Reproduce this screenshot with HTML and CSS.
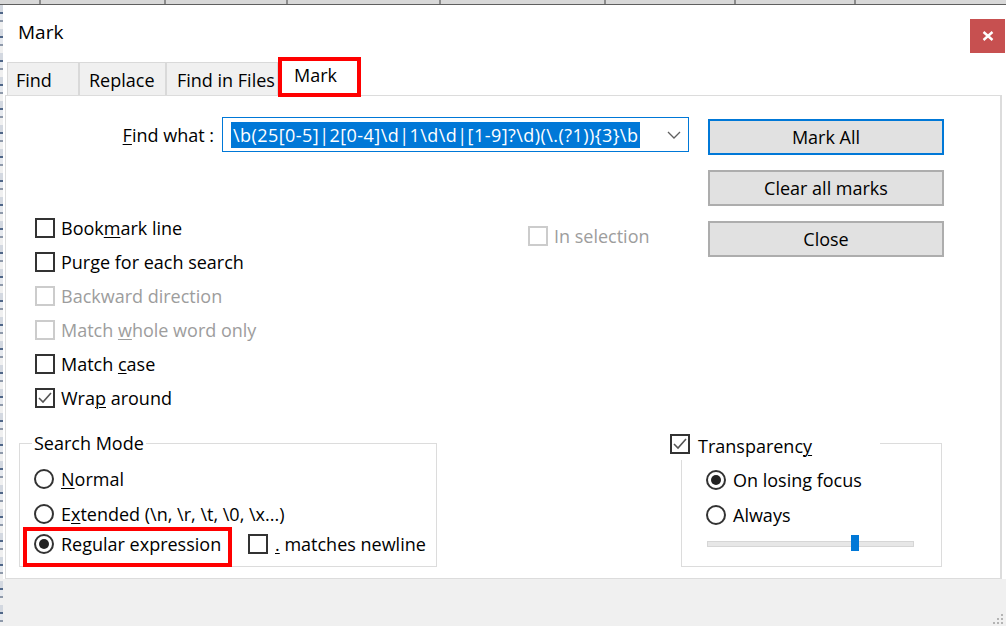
FILE: index.html
```html
<!DOCTYPE html>
<html>
<head>
<meta charset="utf-8">
<link rel="stylesheet" href="styles.css">
</head>
<body>
<div class="topstrip">
  <span class="seg s1"></span><span class="seg s2"></span><span class="seg s3"></span><span class="seg s4"></span><span class="seg s5"></span><span class="seg s6"></span><span class="seg s7"></span>
</div>
<div class="main">
  <div class="leftstrip"></div>
  <div class="window">
    <div class="titlebar">
      <div class="title">Mark</div>
      <div class="closebtn">
        <svg width="12" height="10" viewBox="0 0 12 10"><path d="M1.5 1 L10.5 9 M10.5 1 L1.5 9" stroke="#fff" stroke-width="2.4" fill="none"/></svg>
      </div>
    </div>
    <div class="tabs">
      <div class="tab t-find">Find</div>
      <div class="tab t-replace">Replace</div>
      <div class="tab t-files">Find in Files</div>
      <div class="tab t-mark">Mark</div>
    </div>
    <div class="panel">
      <div class="top">
        <div class="leftcol">
          <div class="findrow">
            <div class="findlabel"><u>F</u>ind what :</div>
            <div class="combo">
              <span class="sel">\b(25[0-5]|2[0-4]\d|1\d\d|[1-9]?\d)(\.(?1)){3}\b</span>
              <svg class="chev" width="14" height="8" viewBox="0 0 14 8"><path d="M1 1 L7 7 L13 1" stroke="#606060" stroke-width="1.3" fill="none"/></svg>
            </div>
          </div>
          <div class="options">
            <div class="cblist">
              <div class="cbrow"><span class="box"></span><span>Book<u>m</u>ark line</span></div>
              <div class="cbrow"><span class="box"></span><span>Purge for each search</span></div>
              <div class="cbrow disabled"><span class="box"></span><span>Backward direction</span></div>
              <div class="cbrow disabled"><span class="box"></span><span>Match <u>w</u>hole word only</span></div>
              <div class="cbrow"><span class="box"></span><span>Match <u>c</u>ase</span></div>
              <div class="cbrow"><span class="box checked"><svg width="16" height="16" viewBox="0 0 16 16"><path d="M2 8 L6 12 L14 3" stroke="#555" stroke-width="1.6" fill="none"/></svg></span><span>Wra<u>p</u> around</span></div>
            </div>
            <div class="insel">
              <div class="cbrow disabled"><span class="box"></span><span>In selection</span></div>
            </div>
          </div>
        </div>
        <div class="btncol">
          <div class="btn default">Mark All</div>
          <div class="btn">Clear all marks</div>
          <div class="btn">Close</div>
        </div>
      </div>
      <div class="bottom">
        <div class="smode">
          <span class="gtitle">Search Mode</span>
          <div class="rrow r1"><span class="radio"></span><span><u>N</u>ormal</span></div>
          <div class="rrow r2"><span class="radio"></span><span>E<u>x</u>tended (\n, \r, \t, \0, \x...)</span></div>
          <div class="rrow r3">
            <div class="hl"><span class="radio on"><span class="dot"></span></span><span>Regular expression</span></div>
            <div class="nl"><span class="box"></span><span><u>.</u> matches newline</span></div>
          </div>
        </div>
        <div class="tgroup">
          <div class="thead">
            <span class="box checked"><svg width="16" height="16" viewBox="0 0 16 16"><path d="M2 8 L6 12 L14 3" stroke="#555" stroke-width="1.6" fill="none"/></svg></span>
            <span class="tlabel">Transparenc<u>y</u></span>
            <span class="tline"></span>
          </div>
          <div class="tbody">
            <div class="rrow t1"><span class="radio on"><span class="dot"></span></span><span>On losing focus</span></div>
            <div class="rrow t2"><span class="radio"></span><span>Always</span></div>
            <div class="slider"><div class="track"></div><div class="thumb"></div></div>
          </div>
        </div>
      </div>
    </div>
    <div class="footer">
      <svg class="grip" width="14" height="14" viewBox="0 0 14 14">
        <rect x="11" y="3" width="2" height="2" fill="#b4b4b4"/>
        <rect x="7" y="7" width="2" height="2" fill="#b4b4b4"/>
        <rect x="11" y="7" width="2" height="2" fill="#b4b4b4"/>
        <rect x="3" y="11" width="2" height="2" fill="#b4b4b4"/>
        <rect x="7" y="11" width="2" height="2" fill="#b4b4b4"/>
        <rect x="11" y="11" width="2" height="2" fill="#b4b4b4"/>
      </svg>
    </div>
  </div>
</div>
</body>
</html>
```
FILE: styles.css
```css
* { box-sizing: border-box; }
html, body { margin: 0; padding: 0; }
body {
  width: 1006px;
  height: 626px;
  overflow: hidden;
  font-family: "Open Sans", "Noto Sans", sans-serif;
  font-size: 18px;
  color: #000;
  background: #fff;
}
u { text-decoration-thickness: 1px; text-underline-offset: 2px; }

.topstrip {
  height: 5px;
  display: flex;
  background: #d8d8d8;
  border-bottom: 1px solid #5f5f5f;
}
.seg { height: 4px; border-right: 2px solid #8c8c8c; }
.s1 { width: 41px; }
.s2 { width: 125px; }
.s3 { width: 122px; }
.s4 { width: 153px; }
.s5 { width: 165px; }
.s6 { width: 130px; }
.s7 { width: 120px; }

.main { display: flex; height: 621px; }
.leftstrip {
  width: 3px;
  background: repeating-linear-gradient(to bottom, #d3d8e0 0 7px, #4f6688 7px 9px, #e6e9ee 9px 15px, #8e99aa 15px 17px, #f0f0f0 17px 24px);
}
.window {
  flex: 1;
  display: flex;
  flex-direction: column;
  background: #fff;
}

.titlebar {
  height: 52px;
  display: flex;
  justify-content: space-between;
  align-items: flex-start;
}
.title {
  font-size: 19px;
  line-height: 26px;
  padding: 14px 0 0 15px;
}
.closebtn {
  margin: 14px 1px 0 0;
  width: 35px;
  height: 34px;
  background: #c75050;
  display: flex;
  align-items: center;
  justify-content: center;
}

.tabs {
  height: 38px;
  display: flex;
  align-items: flex-end;
  padding-left: 4px;
}
.tab {
  height: 33px;
  border: 1px solid #d9d9d9;
  border-bottom: none;
  background: #f0f0f0;
  padding-top: 5px;
  line-height: 24px;
  white-space: nowrap;
}
.t-find { width: 72px; padding-left: 8px; }
.t-replace { width: 87px; padding-left: 9px; }
.t-files { width: 112px; padding-left: 10px; }
.t-mark {
  position: relative;
  z-index: 1;
  width: 83px;
  height: 40px;
  margin-bottom: -2px;
  border: 4px solid #f00;
  background: #fff;
  padding: 2px 0 0 12px;
}

.panel {
  height: 484px;
  margin: 0 4px 0 2px;
  border: 1px solid #dcdcdc;
  border-right-width: 2px;
  background: #fff;
}

.top { display: flex; align-items: flex-start; padding-top: 21px; }
.leftcol { width: 683px; }
.findrow { display: flex; align-items: center; height: 35px; }
.findlabel { width: 208px; text-align: right; }
.combo {
  margin-left: 8px;
  width: 467px;
  height: 35px;
  border: 1px solid #0078d7;
  display: flex;
  align-items: center;
  padding-left: 8px;
}
.sel {
  background: #0078d7;
  color: #fff;
  letter-spacing: 0.45px;
  line-height: 26px;
  padding: 0 2px;
  white-space: nowrap;
}
.chev { margin-left: auto; margin-right: 7px; }

.options { display: flex; margin-top: 59px; }
.cblist { width: 522px; padding-left: 29px; }
.cbrow { height: 34px; display: flex; align-items: center; gap: 6px; white-space: nowrap; }
.box {
  width: 20px;
  height: 20px;
  flex: none;
  border: 2px solid #333;
  background: #fff;
  display: flex;
  align-items: center;
  justify-content: center;
}
.disabled { color: #9d9d9d; }
.disabled .box { border-color: #cccccc; }
.insel { margin-top: 8px; }

.btncol {
  margin-left: 19px;
  margin-top: 2px;
  width: 236px;
  display: flex;
  flex-direction: column;
  gap: 15px;
}
.btn {
  height: 36px;
  background: #e1e1e1;
  border: 2px solid #adadad;
  display: flex;
  align-items: center;
  justify-content: center;
}
.btn.default { border-color: #0078d7; }

.bottom { display: flex; align-items: flex-start; margin-top: 19px; }
.smode {
  margin-left: 13px;
  margin-top: 9px;
  width: 418px;
  height: 124px;
  border: 1px solid #dcdcdc;
  display: flex;
  flex-direction: column;
}
.gtitle {
  align-self: flex-start;
  margin: -12px 0 0 12px;
  padding: 0 2px;
  background: #fff;
  line-height: 22px;
}
.rrow { display: flex; align-items: center; height: 24px; padding-left: 14px; white-space: nowrap; }
.r1 { margin-top: 13px; }
.r2 { margin-top: 11px; }
.r3 { margin-top: 6px; }
.radio {
  width: 20px;
  height: 20px;
  flex: none;
  border: 2px solid #333;
  border-radius: 50%;
  margin-right: 7px;
  display: flex;
  align-items: center;
  justify-content: center;
  background: #fff;
}
.dot { width: 10px; height: 10px; border-radius: 50%; background: #222; }
.hl {
  display: flex;
  align-items: center;
  width: 209px;
  height: 40px;
  border: 4px solid #f00;
  padding: 1px 6px 7px 7px;
  margin: -5px -10px -11px -11px;
}
.nl { display: flex; align-items: center; gap: 7px; margin-left: 26px; }

.tgroup { margin-left: 233px; width: 272px; }
.thead { display: flex; height: 26px; }
.tlabel { margin-left: 8px; width: 182px; line-height: 24px; }
.tline {
  flex: 1;
  margin-top: 9px;
  border-top: 1px solid #dcdcdc;
  border-right: 1px solid #dcdcdc;
}
.tbody {
  margin-left: 11px;
  height: 107px;
  border: 1px solid #dcdcdc;
  border-top: none;
  padding: 8px 0 0 24px;
  display: flex;
  flex-direction: column;
}
.tbody .rrow { padding-left: 0; }
.t2 { margin-top: 11px; }
.slider {
  position: relative;
  margin-top: 9px;
  margin-left: 1px;
  width: 207px;
  height: 16px;
  padding-top: 5px;
}
.track {
  height: 6px;
  border: 1px solid #d6d6d6;
  background: #e7e7e7;
}
.thumb {
  position: absolute;
  left: 144px;
  top: -1px;
  width: 8px;
  height: 16px;
  background: #0078d7;
}

.footer {
  flex: 1;
  background: #f0f0f0;
  display: flex;
  justify-content: flex-end;
  align-items: flex-end;
}
.grip { margin: 0 2px 1px 0; }
```
